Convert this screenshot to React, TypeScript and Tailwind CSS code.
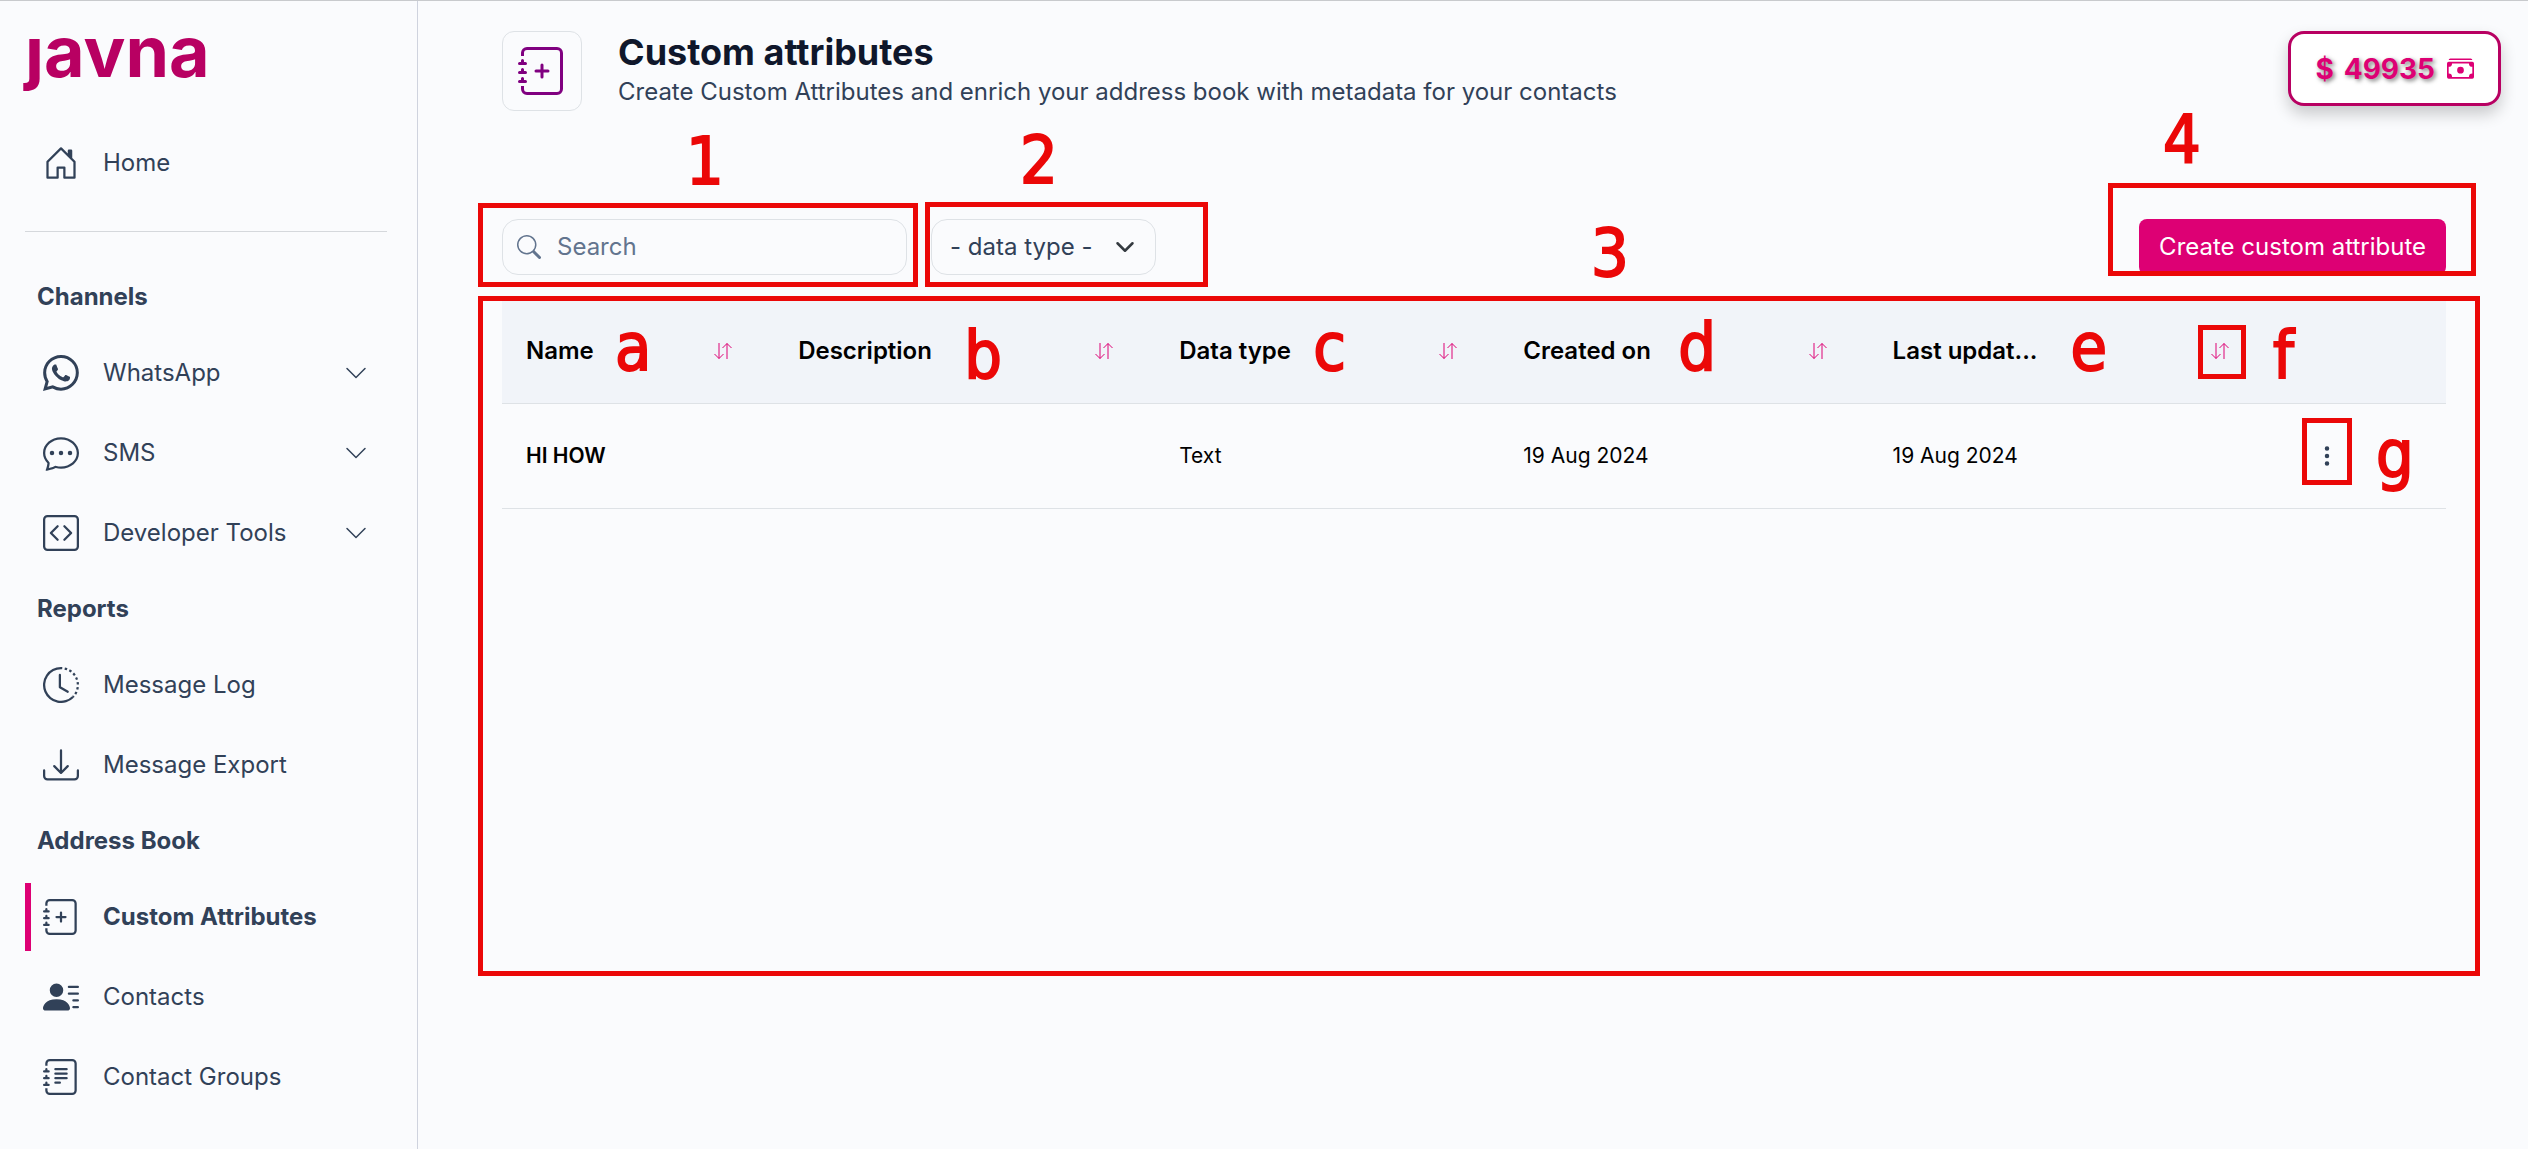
import type { ReactNode } from 'react';
import {
  BsCashStack,
  BsChatDots,
  BsChevronDown,
  BsClockHistory,
  BsCodeSquare,
  BsDownload,
  BsHouseDoor,
  BsJournalPlus,
  BsJournalText,
  BsPersonLinesFill,
  BsSearch,
  BsThreeDotsVertical,
  BsWhatsapp,
} from 'react-icons/bs';
import type { IconType } from 'react-icons';
import clsx from 'clsx';

interface NavItemProps {
  icon: IconType;
  label: string;
  expandable?: boolean;
  active?: boolean;
}

function NavItem({ icon: Icon, label, expandable, active }: NavItemProps) {
  return (
    <li className="py-1.5">
      <a
        href="#"
        className={clsx(
          'flex h-[68px] items-center gap-6 border-l-6 pr-[19px] pl-3',
          active ? 'border-[#dd0074] font-bold' : 'border-transparent',
        )}
      >
        <Icon size={36} className="shrink-0" />
        <span className="grow">{label}</span>
        {expandable && <BsChevronDown size={24} />}
      </a>
    </li>
  );
}

function NavSection({ title, items }: { title: string; items: NavItemProps[] }) {
  return (
    <section>
      <h2 className="flex h-[72px] items-center pl-3 font-bold">{title}</h2>
      <ul>
        {items.map((item) => (
          <NavItem key={item.label} {...item} />
        ))}
      </ul>
    </section>
  );
}

const channels: NavItemProps[] = [
  { icon: BsWhatsapp, label: 'WhatsApp', expandable: true },
  { icon: BsChatDots, label: 'SMS', expandable: true },
  { icon: BsCodeSquare, label: 'Developer Tools', expandable: true },
];

const reports: NavItemProps[] = [
  { icon: BsClockHistory, label: 'Message Log' },
  { icon: BsDownload, label: 'Message Export' },
];

const addressBook: NavItemProps[] = [
  { icon: BsJournalPlus, label: 'Custom Attributes', active: true },
  { icon: BsPersonLinesFill, label: 'Contacts' },
  { icon: BsJournalText, label: 'Contact Groups' },
];

function Sidebar() {
  return (
    <aside className="w-[418px] shrink-0 border-r border-[#cfd3de] pr-[30px] pl-[25px] text-2xl text-slate-700">
      <a
        href="#"
        aria-label="javna"
        className="block h-[122px] pt-4 text-[70px] leading-none font-bold text-[#b80062]"
      >
        ȷavna
      </a>
      <nav>
        <ul>
          <NavItem icon={BsHouseDoor} label="Home" />
        </ul>
        <hr className="mt-7 mb-[29px] border-[#d5d8dc]" />
        <NavSection title="Channels" items={channels} />
        <NavSection title="Reports" items={reports} />
        <NavSection title="Address Book" items={addressBook} />
      </nav>
    </aside>
  );
}

// red callout frame, laid over its relative parent
function Frame({ className }: { className: string }) {
  return <div className={clsx('pointer-events-none absolute border-5 border-[#eb0808]', className)} />;
}

// red callout character
function Mark({ children, className }: { children: ReactNode; className: string }) {
  return (
    <span
      className={clsx(
        "pointer-events-none absolute font-['DejaVu_Sans_Condensed','DejaVu_Sans',sans-serif] text-[66px] leading-none font-normal text-[#eb0808] [-webkit-text-stroke:2px_#eb0808]",
        className,
      )}
    >
      {children}
    </span>
  );
}

function SortButton({ label, framed }: { label: string; framed?: boolean }) {
  return (
    <button aria-label={`Sort by ${label}`} className="relative mr-[18px] text-[#dd0074]">
      <svg width="18" height="16" viewBox="0 0 18 16" fill="none" stroke="currentColor">
        <path d="M5 0v15.5M.5 11 5 15.5 9.5 11M13 16V.5M8.5 5 13 .5 17.5 5" />
      </svg>
      {framed && <Frame className="-top-[18px] -left-[13px] h-[54px] w-12" />}
    </button>
  );
}

interface Column {
  label: string;
  width: string;
  mark: string;
  markPosition: string;
}

const columns: Column[] = [
  { label: 'Name', width: 'w-[14%]', mark: 'a', markPosition: 'top-4 left-[113px]' },
  { label: 'Description', width: 'w-[19.6%]', mark: 'b', markPosition: 'top-6 left-[190px]' },
  { label: 'Data type', width: 'w-[17.7%]', mark: 'c', markPosition: 'top-4 left-[158px]' },
  { label: 'Created on', width: 'w-[19%]', mark: 'd', markPosition: 'top-4 left-[179px]' },
  { label: 'Last updat...', width: 'w-[20.7%]', mark: 'e', markPosition: 'top-4 left-[202px]' },
];

const attributes = [
  { name: 'HI HOW', description: '', type: 'Text', created: '19 Aug 2024', updated: '19 Aug 2024' },
];

function AttributesTable() {
  return (
    <table className="w-full table-fixed text-left text-black">
      <thead>
        <tr className="h-[104px] border-b border-[#dee2e6] bg-[#f1f4f9] text-2xl">
          {columns.map((column, i) => (
            <th key={column.label} scope="col" className={clsx('relative px-6 font-semibold', column.width)}>
              <div className="flex items-center justify-between">
                {column.label}
                <SortButton label={column.label} framed={i === columns.length - 1} />
              </div>
              <Mark className={column.markPosition}>{column.mark}</Mark>
            </th>
          ))}
          <th scope="col" className="relative">
            <Mark className="top-6 left-0.5">f</Mark>
          </th>
        </tr>
      </thead>
      <tbody>
        {attributes.map((attribute) => (
          <tr key={attribute.name} className="h-[105px] border-b border-[#dee2e6] text-[21px]">
            <td className="px-6 font-semibold">{attribute.name}</td>
            <td className="px-6">{attribute.description}</td>
            <td className="px-6">{attribute.type}</td>
            <td className="px-6">{attribute.created}</td>
            <td className="px-6">{attribute.updated}</td>
            <td className="relative px-11">
              <button aria-label="Row actions" className="relative block text-slate-700">
                <BsThreeDotsVertical size={24} />
                <Frame className="-top-[26px] -left-[13px] h-[67px] w-[50px]" />
              </button>
              <Mark className="top-[18px] left-[105px]">g</Mark>
            </td>
          </tr>
        ))}
      </tbody>
    </table>
  );
}

function PageHeader() {
  return (
    <header className="flex items-start pr-[27px] pl-[84px]">
      <div className="flex size-20 items-center justify-center rounded-xl border border-[#dee2e6] text-[purple]">
        <BsJournalPlus size={48} />
      </div>
      <div className="ml-9 grow">
        <h1 className="text-4xl leading-[42px] font-bold text-slate-900">Custom attributes</h1>
        <p className="text-2xl leading-[38px] text-slate-700">
          Create Custom Attributes and enrich your address book with metadata for your contacts
        </p>
      </div>
      <div className="flex h-[75px] items-center gap-3 rounded-2xl border-3 border-[#b80062] bg-white px-6 text-[28px] font-bold text-[#dd0074] shadow-[0_8px_16px_rgba(0,0,0,0.2)]">
        <span className="flex gap-2.5 [text-shadow:2px_2px_4px_rgba(0,0,0,0.5)]">
          <span>$</span>
          <span>49935</span>
        </span>
        <BsCashStack size={27} />
      </div>
    </header>
  );
}

function Toolbar() {
  return (
    <div className="flex items-start gap-6 text-2xl">
      <div className="relative">
        <label className="flex h-14 w-[405px] items-center gap-4 rounded-2xl border border-[#dee2e6] px-3.5 text-slate-500">
          <BsSearch size={24} className="shrink-0" />
          <input
            type="search"
            aria-label="Search"
            placeholder="Search"
            className="w-full bg-transparent outline-none placeholder:text-slate-500"
          />
        </label>
        <Frame className="-top-4 -left-6 h-[84px] w-[440px]" />
        <Mark className="-top-[90px] left-[184px]">1</Mark>
      </div>
      <div className="relative">
        <select
          aria-label="Data type"
          className="h-14 w-[225px] appearance-none rounded-2xl border border-[#dee2e6] bg-transparent pr-12 pl-[18px] text-slate-700"
        >
          <option>- data type -</option>
        </select>
        <svg
          viewBox="0 0 16 16"
          fill="none"
          stroke="#343a40"
          strokeWidth="2"
          strokeLinecap="round"
          strokeLinejoin="round"
          className="pointer-events-none absolute top-[18px] right-[21px] size-5"
        >
          <path d="m2 5 6 6 6-6" />
        </svg>
        <Frame className="-top-[17px] -left-1.5 h-[85px] w-[283px]" />
        <Mark className="-top-[91px] left-[89px]">2</Mark>
      </div>
      <div className="relative ml-auto">
        <button className="h-14 rounded-lg bg-[#dd0074] px-5 text-white">Create custom attribute</button>
        <Frame className="-top-9 -right-[30px] -left-[31px] h-[93px]" />
        <Mark className="-top-28 left-6">4</Mark>
      </div>
    </div>
  );
}

export default function App() {
  return (
    <div className="flex min-h-screen border-t border-[#c8cacd] bg-[#fafbfd] font-[Inter,sans-serif]">
      <Sidebar />
      <main className="grow pt-[30px]">
        <PageHeader />
        <div className="mt-[108px] pr-[82px] pl-[84px]">
          <Toolbar />
          <div className="relative mt-6 min-h-[680px]">
            <AttributesTable />
            <Frame className="-top-[3px] -right-[34px] -left-6 h-[680px]" />
            <Mark className="-top-[78px] left-[1089px]">3</Mark>
          </div>
        </div>
      </main>
    </div>
  );
}
